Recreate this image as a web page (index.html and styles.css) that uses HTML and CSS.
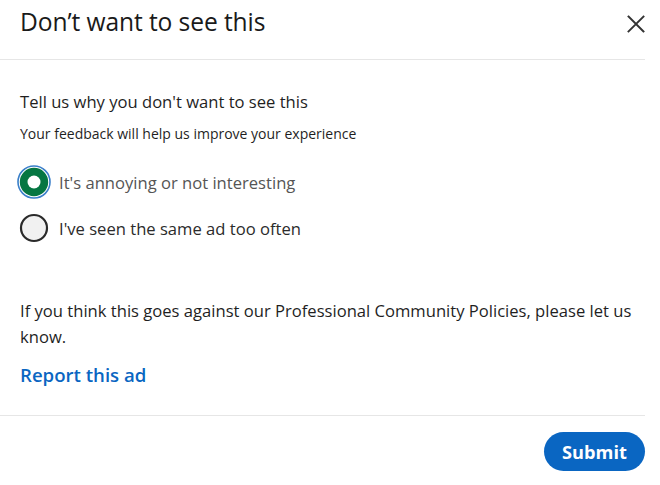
FILE: index.html
```html
<!DOCTYPE html>
<html lang="en">
<head>
<meta charset="utf-8">
<title>Don't want to see this</title>
<link rel="stylesheet" href="styles.css">
</head>
<body>
<div class="dialog">
  <header class="dialog-header">
    <h2 class="dialog-title">Don’t want to see this</h2>
    <button class="close-btn" aria-label="Dismiss">
      <svg width="18" height="18" viewBox="0 0 18 18"><path d="M1.5 1.5 L16.5 16.5 M16.5 1.5 L1.5 16.5" stroke="#333" stroke-width="1.9" fill="none" stroke-linecap="square"/></svg>
    </button>
  </header>
  <div class="dialog-body">
    <p class="question">Tell us why you don't want to see this</p>
    <p class="hint">Your feedback will help us improve your experience</p>
    <div class="options">
      <label class="option">
        <span class="radio">
          <svg width="34" height="34" viewBox="0 0 34 34"><circle cx="17" cy="17" r="16" fill="none" stroke="#3a7fc9" stroke-width="1.6"/><circle cx="17" cy="17" r="14.2" fill="#057642"/><circle cx="17" cy="17" r="6.5" fill="#fff"/></svg>
        </span>
        <span class="option-text muted">It's annoying or not interesting</span>
      </label>
      <label class="option">
        <span class="radio">
          <svg width="34" height="34" viewBox="0 0 34 34"><circle cx="17" cy="17" r="13" fill="#f1f1f1" stroke="#2a2a2a" stroke-width="2.2"/></svg>
        </span>
        <span class="option-text">I've seen the same ad too often</span>
      </label>
    </div>
    <p class="policy">If you think this goes against our Professional Community Policies, please let us know.</p>
    <a class="report" href="#">Report this ad</a>
  </div>
  <footer class="dialog-footer">
    <button class="submit">Submit</button>
  </footer>
</div>
</body>
</html>
```
FILE: styles.css
```css
* { box-sizing: border-box; }
html, body { margin: 0; padding: 0; background: #fff; }
body {
  font-family: "Open Sans", "Noto Sans", sans-serif;
  color: #1f1f1f;
}
.dialog {
  width: 645px;
  background: #fff;
}
.dialog-header {
  height: 60px;
  display: flex;
  justify-content: space-between;
  align-items: flex-start;
  padding-left: 20px;
  border-bottom: 1px solid #e6e6e6;
}
.dialog-title {
  margin: 0;
  font-size: 24.6px;
  font-weight: 400;
  line-height: 44px;
  color: #1a1a1a;
  letter-spacing: -0.1px;
}
.close-btn {
  margin-top: 15px;
  width: 18px;
  height: 18px;
  padding: 0;
  border: 0;
  background: none;
  display: flex;
}
.dialog-body {
  padding: 30px 8px 27px 20px;
  border-bottom: 1px solid #e6e6e6;
}
.question {
  margin: 0;
  font-size: 16.6px;
  line-height: 24px;
  color: #1f1f1f;
}
.hint {
  margin: 10px 0 0 0;
  font-size: 14px;
  line-height: 20px;
  color: #1f1f1f;
}
.options {
  margin-top: 20px;
  display: flex;
  flex-direction: column;
  gap: 10px;
}
.option {
  display: flex;
  align-items: center;
  height: 36px;
  margin-left: -3px;
}
.radio {
  width: 34px;
  height: 34px;
  display: flex;
}
.option-text {
  margin-left: 8px;
  font-size: 16.6px;
  color: #2b2b2b;
}
.option-text.muted { color: #555; }
.policy {
  margin: 52px 0 0 0;
  font-size: 16.6px;
  line-height: 26px;
  color: #1f1f1f;
}
.report {
  display: inline-block;
  margin-top: 12px;
  font-size: 18.6px;
  line-height: 26px;
  font-weight: 600;
  color: #0a66c2;
  text-decoration: none;
}
.dialog-footer {
  display: flex;
  justify-content: flex-end;
  padding-top: 16px;
}
.submit {
  height: 39px;
  width: 101px;
  border: 0;
  border-radius: 20px;
  background: #0a66c2;
  color: #fff;
  font-family: "Open Sans", "Noto Sans", sans-serif;
  font-size: 18.2px;
  font-weight: 700;
  padding: 0;
}
```
